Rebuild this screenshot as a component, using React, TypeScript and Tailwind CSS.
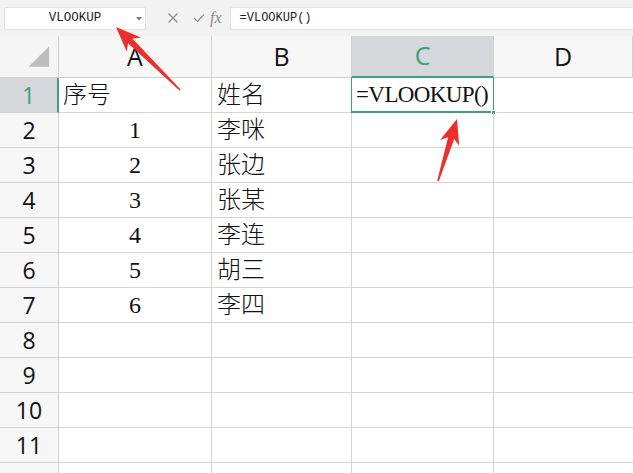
import React from "react";

const serif = { fontFamily: '"Liberation Serif", "Noto Sans CJK SC", serif' };
const sans = { fontFamily: '"Open Sans", "Noto Sans", "Noto Sans CJK SC", sans-serif' };
const mono = { fontFamily: '"Liberation Mono", "Noto Sans CJK SC", monospace' };

function arrowPoints(tx: number, ty: number, sx: number, sy: number) {
  const dx = tx - sx;
  const dy = ty - sy;
  const L = Math.hypot(dx, dy);
  const ux = dx / L;
  const uy = dy / L;
  const nx = -uy;
  const ny = ux;
  const h = 25;
  const w = 10;
  const notch = 20;
  const s = 3.2;
  const t = 0.8;
  const p = (a: number, b: number) => `${a.toFixed(1)},${b.toFixed(1)}`;
  return [
    p(tx, ty),
    p(tx - h * ux + w * nx, ty - h * uy + w * ny),
    p(tx - notch * ux + s * nx, ty - notch * uy + s * ny),
    p(sx + t * nx, sy + t * ny),
    p(sx - t * nx, sy - t * ny),
    p(tx - notch * ux - s * nx, ty - notch * uy - s * ny),
    p(tx - h * ux - w * nx, ty - h * uy - w * ny),
  ].join(" ");
}

const rows: [string, string][] = [
  ["序号", "姓名"],
  ["1", "李咪"],
  ["2", "张边"],
  ["3", "张某"],
  ["4", "李连"],
  ["5", "胡三"],
  ["6", "李四"],
  ["", ""],
  ["", ""],
  ["", ""],
  ["", ""],
  ["", ""],
];

export default function App() {
  return (
    <div className="relative w-[633px] h-[473px] overflow-hidden bg-white">
      {/* formula bar */}
      <div className="flex h-[36px] items-center bg-[#f2f2f2] pl-[4px]">
        <div className="relative flex h-[23px] w-[142px] items-center justify-center rounded-[2px] border border-[#e2e2e2] bg-white">
          <span className="text-[12.5px] text-[#222]" style={mono}>VLOOKUP</span>
          <svg className="absolute right-[3px] top-[9px]" width="6" height="4" viewBox="0 0 6 4">
            <path d="M0 0 H6 L3 3.5 Z" fill="#777" />
          </svg>
        </div>
        <div className="ml-[21px] flex items-center">
          <svg width="12" height="12" viewBox="0 0 12 12">
            <path d="M1.5 1.5 L10.5 10.5 M10.5 1.5 L1.5 10.5" stroke="#8a8a8a" strokeWidth="1.2" fill="none" />
          </svg>
          <svg className="ml-[14px]" width="12" height="10" viewBox="0 0 12 10">
            <path d="M1 5 L4.5 8.5 L11 1.5" stroke="#8a8a8a" strokeWidth="1.2" fill="none" />
          </svg>
          <span className="ml-[5px] italic text-[16px] text-[#8a8a8a] leading-none" style={serif}>fx</span>
        </div>
        <div className="ml-[8px] flex h-[23px] flex-1 items-center rounded-l-[2px] border border-r-0 border-[#e2e2e2] bg-white pl-[9px]">
          <span className="text-[12px] text-[#222]" style={mono}>=VLOOKUP()</span>
        </div>
      </div>

      {/* sheet grid */}
      <div className="grid grid-cols-[59px_153px_140px_142px_139px] grid-rows-[42px_repeat(12,35px)]">
        {/* header row */}
        <div className="flex items-center justify-center border-r border-b border-[#d0d0d0] bg-[#f5f5f5]">
          <svg width="59" height="42" viewBox="0 0 59 42">
            <path d="M29 31 L50 31 L50 10 Z" fill="#bdbdbd" />
          </svg>
        </div>
        {["A", "B", "C", "D"].map((c) => (
          <div
            key={c}
            className={
              c === "C"
                ? "flex items-center justify-center border-r border-b-2 border-r-[#d0d0d0] border-b-[#3f9f7b] bg-[#d5d7da] text-[#35a47a] text-[25px]"
                : "flex items-center justify-center border-r border-b border-[#d0d0d0] bg-[#f7f7f7] text-[#111] text-[25px]"
            }
            style={sans}
          >
            {c}
          </div>
        ))}

        {rows.map(([a, b], i) => (
          <React.Fragment key={i}>
            <div
              className={
                i === 0
                  ? "flex items-center justify-center border-r-2 border-b border-r-[#3f9f7b] border-b-[#d0d0d0] bg-[#d5d7da] text-[#35a47a] text-[23px]"
                  : "flex items-center justify-center border-r border-b border-[#d0d0d0] bg-[#f7f7f7] text-[#111] text-[23px]"
              }
              style={sans}
            >
              {i < 11 ? i + 1 : ""}
            </div>
            <div
              className={
                i === 0
                  ? "flex items-center border-r border-b border-[#d4d4d4] pl-[4px] text-[24px] font-light text-[#111]"
                  : "flex items-center justify-center border-r border-b border-[#d4d4d4] text-[24px] text-[#111]"
              }
              style={serif}
            >
              {a}
            </div>
            <div className="flex items-center border-r border-b border-[#d4d4d4] pl-[5px] text-[24px] font-light text-[#111]" style={serif}>
              {b}
            </div>
            <div className="relative flex items-center border-r border-b border-[#d4d4d4] text-[23px] text-[#111]" style={serif}>
              {i === 0 && (
                <>
                  <span className="pl-[4px] tracking-[-0.6px] whitespace-nowrap">=VLOOKUP()</span>
                  <div className="pointer-events-none absolute left-[-1px] top-[-1px] right-[-1px] bottom-[-1px] border border-b-2 border-[#3f9f7b]" />
                  <div className="absolute right-[-3px] bottom-[-3px] h-[5px] w-[5px] bg-[#3f9f7b] border border-white" />
                </>
              )}
            </div>
            <div className="flex items-center border-b border-[#d4d4d4]" />
          </React.Fragment>
        ))}
      </div>

      {/* red annotation arrows */}
      <svg className="pointer-events-none absolute left-0 top-0" width="633" height="473" viewBox="0 0 633 473">
        <polygon points={arrowPoints(116, 27, 180, 90)} fill="#ee2d2d" />
        <polygon points={arrowPoints(457, 119, 438, 181)} fill="#ee2d2d" />
      </svg>
    </div>
  );
}
